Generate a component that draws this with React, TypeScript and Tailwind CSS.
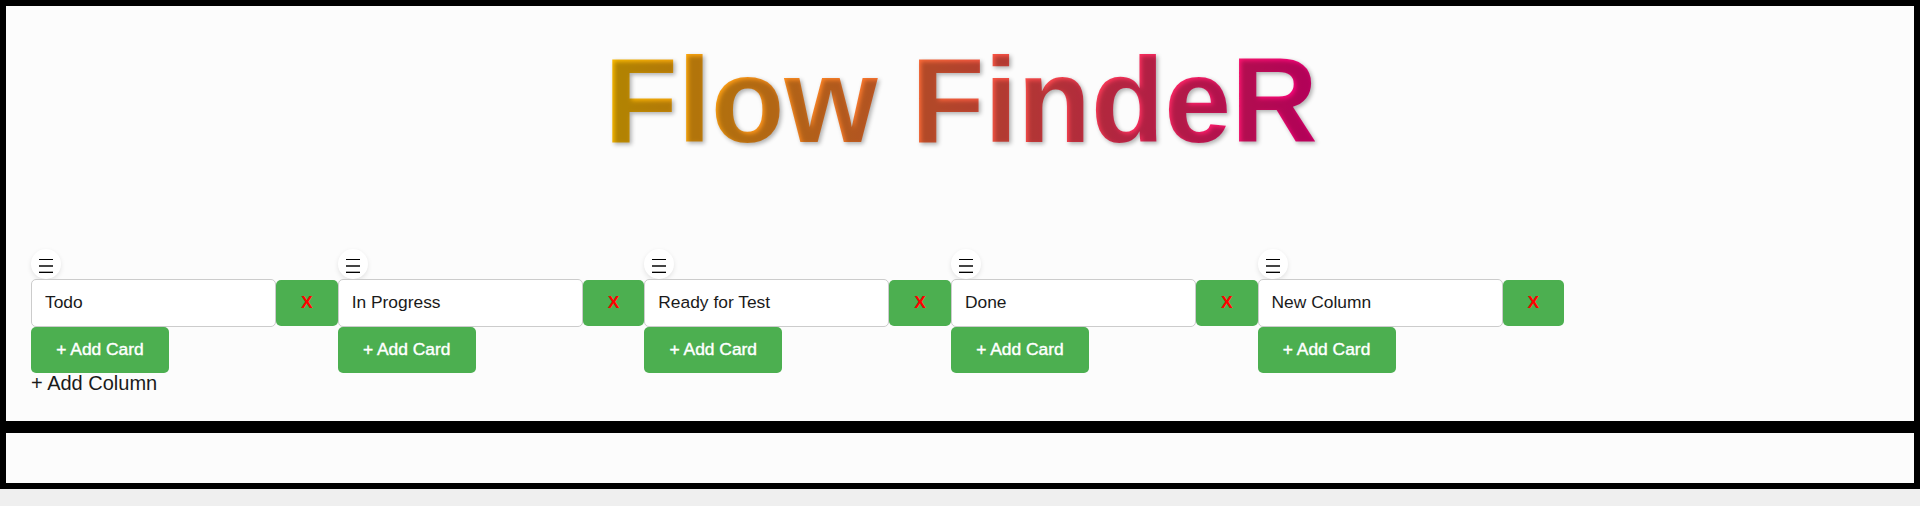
const columns = ['Todo', 'In Progress', 'Ready for Test', 'Done', 'New Column'];

function Column({ name }: { name: string }) {
  return (
    <div className="w-[306.65px] shrink-0">
      <div className="flex h-[30px] w-[30px] justify-center rounded-full bg-white pt-[10px] shadow-[0_2px_5px_rgba(0,0,0,0.1)]">
        <svg width="14" height="14" viewBox="0 0 14 14" shapeRendering="crispEdges">
          <path d="M0 0h14v1H0zM0 13h14v1H0z" fill="#000" />
          <path d="M0 12h14v1H0z" fill="#aaa" />
          <path d="M0 6h14v2H0z" fill="#444" />
        </svg>
      </div>
      <div className="flex items-center">
        <input
          defaultValue={name}
          className="h-[48px] w-[245px] rounded-[5px] border border-[#ccc] bg-white px-[13px] pb-[2px] text-[17.4px] text-[#1a1a1a]"
        />
        <button className="h-[46px] w-[61.65px] rounded-[5px] bg-[#4caf50] pb-[2px] text-[17.4px] font-bold text-[#f00]">
          X
        </button>
      </div>
      <button className="block h-[46px] w-[138px] rounded-[5px] bg-[#4caf50] pb-[2px] text-[17.4px] whitespace-nowrap text-white [-webkit-text-stroke:0.4px_white]">
        + Add Card
      </button>
    </div>
  );
}

export default function App() {
  return (
    <div className="h-[506px] overflow-hidden bg-[#efefef] font-['Liberation_Sans',Arial,sans-serif] text-[#1a1a1a]">
      <main className="h-[427px] border-[6px] border-black bg-[#fcfcfc] px-[25px]">
        <header className="flex h-[243px] justify-center pt-[25px] pl-[2px]">
          <h1 className="h-[138px] bg-[linear-gradient(90deg,#ffc000,#ff0080)] bg-clip-text text-[120px] leading-[138px] font-bold whitespace-nowrap text-transparent [text-shadow:2px_2px_4px_rgba(0,0,0,0.3)]">
            Flow FindeR
          </h1>
        </header>
        <div className="flex">
          {columns.map((name) => (
            <Column key={name} name={name} />
          ))}
        </div>
        <div className="text-[20px] leading-[21px]">+ Add Column</div>
      </main>
      <section className="h-[62px] border-[6px] border-black bg-[#fcfcfc]" />
    </div>
  );
}
